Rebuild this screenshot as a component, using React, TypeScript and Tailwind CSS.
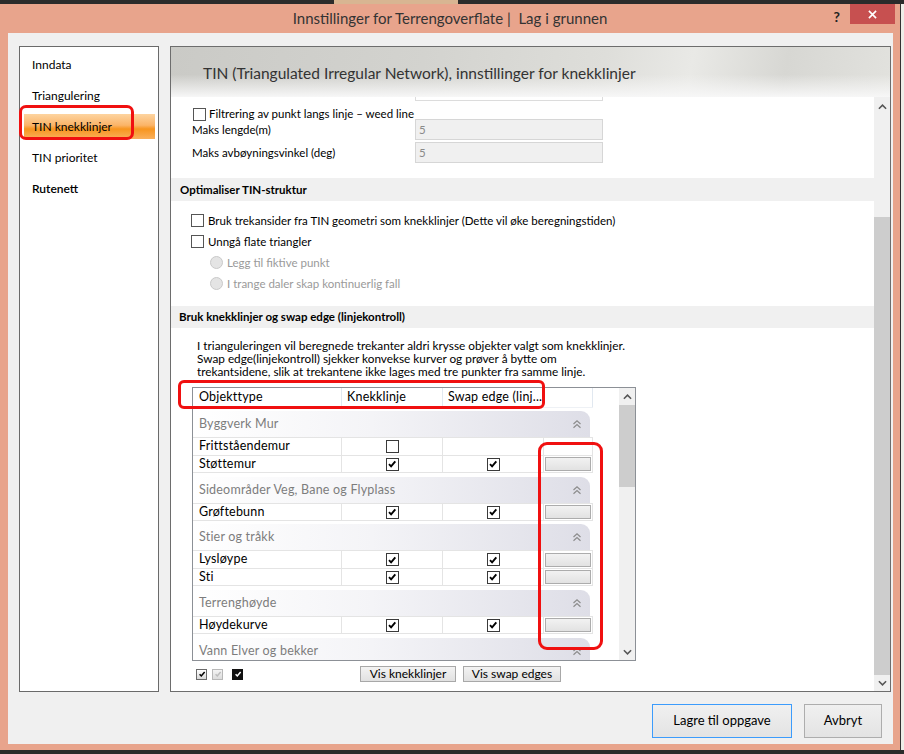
import React from 'react';

const SANS = "font-['Lato','Noto_Sans',sans-serif]";

function CheckMark({ className }: { className?: string }) {
    return (
        <svg viewBox="0 0 10 10" className={className}>
            <path d="M2 5.2 L4.1 7.4 L8.3 2.4" fill="none" stroke="currentColor" strokeWidth="1.9" />
        </svg>
    );
}

function Checkbox({ checked = false }: { checked?: boolean }) {
    return (
        <span className="flex h-[13px] w-[13px] shrink-0 items-center justify-center border border-[#3a3a3a] bg-white">
            {checked && <CheckMark className="h-[10px] w-[10px] text-black" />}
        </span>
    );
}

function FormCheckbox() {
    return <span className="h-[13px] w-[13px] shrink-0 border border-[#555] bg-white" />;
}

function Radio() {
    return <span className="h-[13px] w-[13px] shrink-0 rounded-full border border-[#c9c9c9] bg-[#e4e4e4]" />;
}

function Chevron({ down = false, className }: { down?: boolean; className?: string }) {
    return (
        <svg viewBox="0 0 10 6" className={className}>
            <path
                d={down ? 'M1 1 L5 5 L9 1' : 'M1 5 L5 1 L9 5'}
                fill="none"
                stroke="currentColor"
                strokeWidth="1.7"
            />
        </svg>
    );
}

function DoubleChevron() {
    return (
        <svg viewBox="0 0 10 10" className="h-[10px] w-[10px] text-[#8c8c8c]">
            <path d="M1.5 5 L5 1.8 L8.5 5 M1.5 8.8 L5 5.6 L8.5 8.8" fill="none" stroke="currentColor" strokeWidth="1.2" />
        </svg>
    );
}

interface Row {
    name: string;
    knekk: boolean;
    swap: boolean | null;
    button: boolean;
}

interface Group {
    title: string;
    gap: string;
    rows: Row[];
}

const groups: Group[] = [
    {
        title: 'Byggverk Mur',
        gap: 'mt-[3px]',
        rows: [
            { name: 'Frittståendemur', knekk: false, swap: null, button: false },
            { name: 'Støttemur', knekk: true, swap: true, button: true },
        ],
    },
    {
        title: 'Sideområder Veg, Bane og Flyplass',
        gap: 'mt-[4px]',
        rows: [{ name: 'Grøftebunn', knekk: true, swap: true, button: true }],
    },
    {
        title: 'Stier og tråkk',
        gap: 'mt-[3px]',
        rows: [
            { name: 'Lysløype', knekk: true, swap: true, button: true },
            { name: 'Sti', knekk: true, swap: true, button: true },
        ],
    },
    {
        title: 'Terrenghøyde',
        gap: 'mt-[4px]',
        rows: [{ name: 'Høydekurve', knekk: true, swap: true, button: true }],
    },
    {
        title: 'Vann Elver og bekker',
        gap: 'mt-[4px]',
        rows: [],
    },
];

const navItems = ['Inndata', 'Triangulering', 'TIN knekklinjer', 'TIN prioritet', 'Rutenett'];

function GroupBand({ title }: { title: string }) {
    return (
        <div className="flex h-[26px] w-[397px] items-center justify-between rounded-tr-[9px] bg-[linear-gradient(90deg,#ffffff_0%,#f4f4f7_45%,#dedee7_100%)] pl-[6px] pr-[8px]">
            <span className="text-[12.5px] tracking-[0.2px] text-[#7d7d7d]">{title}</span>
            <DoubleChevron />
        </div>
    );
}

function TableRow({ row, last }: { row: Row; last: boolean }) {
    return (
        <div className={`flex h-[18px] w-[400px] border-t border-r border-[#e4e4e4] ${last ? 'border-b' : ''}`}>
            <div className="flex w-[149px] items-center border-r border-[#e4e4e4] pl-[6px] text-[12.5px] tracking-[0.2px] text-black">
                {row.name}
            </div>
            <div className="flex w-[101px] items-center justify-center border-r border-[#e4e4e4]">
                <Checkbox checked={row.knekk} />
            </div>
            <div className="flex w-[101px] items-center justify-center border-r border-[#e4e4e4]">
                {row.swap !== null && <Checkbox checked={row.swap} />}
            </div>
            <div className="flex w-[48px] items-center justify-center">
                {row.button && (
                    <span className="h-[14px] w-[46px] border border-[#acacac] bg-[linear-gradient(180deg,#f2f2f2,#e2e2e2)]" />
                )}
            </div>
        </div>
    );
}

function ObjectTable() {
    return (
        <div className="ml-[21px] mt-[9px] flex h-[274px] w-[444px] border border-[#8c9096] bg-white">
            <div className="flex-1 overflow-hidden">
                <div className="flex h-[20px] w-[400px] border-b border-[#eef1f5] text-[12.5px] tracking-[0.2px] text-black">
                    <div className="flex w-[149px] items-center border-r border-[#e1e8f0] pl-[6px]">Objekttype</div>
                    <div className="flex w-[101px] items-center border-r border-[#e1e8f0] pl-[5px]">Knekklinje</div>
                    <div className="flex w-[101px] items-center border-r border-[#e1e8f0] pl-[5px]">Swap edge (linj...</div>
                    <div className="w-[49px] border-r border-[#e1e8f0]" />
                </div>
                {groups.map((g) => (
                    <div key={g.title} className={g.gap}>
                        <GroupBand title={g.title} />
                        {g.rows.map((r, i) => (
                            <TableRow key={r.name} row={r} last={i === g.rows.length - 1} />
                        ))}
                    </div>
                ))}
            </div>
            <div className="flex w-[16px] flex-col bg-[#f0f0f0]">
                <div className="flex h-[17px] items-center justify-center">
                    <Chevron className="h-[6px] w-[9px] text-[#555]" />
                </div>
                <div className="h-[82px] bg-[#cdcdcd]" />
                <div className="flex-1" />
                <div className="flex h-[17px] items-center justify-center">
                    <Chevron down className="h-[6px] w-[9px] text-[#555]" />
                </div>
            </div>
        </div>
    );
}

function MiniBox({ variant }: { variant: 'normal' | 'faded' | 'dark' }) {
    const box =
        variant === 'dark'
            ? 'bg-[#111] border-[#111] text-white'
            : variant === 'faded'
              ? 'bg-[linear-gradient(180deg,#f4f4f4,#dcdcdc)] border-[#b8b8b8] text-[#bdbdbd]'
              : 'bg-[linear-gradient(180deg,#ffffff,#d8d8d8)] border-[#6a6a6a] text-black';
    return (
        <span className={`flex h-[11px] w-[11px] items-center justify-center border ${box}`}>
            <CheckMark className="h-[8px] w-[8px]" />
        </span>
    );
}

function SmallButton({ label, width }: { label: string; width: string }) {
    return (
        <button
            type="button"
            className={`flex h-[16px] ${width} items-center justify-center border border-[#a8a8a8] bg-[linear-gradient(180deg,#f3f3f3,#e1e1e1)] text-[12px] text-black`}
        >
            {label}
        </button>
    );
}

function ContentArea() {
    return (
        <div className="flex h-[594px]">
            <div className="w-[703px] overflow-hidden bg-white text-[11.5px] text-black">
                <div className="ml-[244px] h-[4px] w-[188px] border-x border-b border-[#dcdcdc]" />

                <div className="mt-[3px] flex h-[20px] items-center pl-[22px]">
                    <FormCheckbox />
                    <span className="ml-[3px]">Filtrering av punkt langs linje – weed line</span>
                </div>

                <div className="mt-[-5px] flex h-[21px] items-center">
                    <span className="w-[244px] pl-[21px]">Maks lengde(m)</span>
                    <span className="flex h-[21px] w-[188px] items-center border border-[#d6d6d6] bg-[#f0f0f0] pl-[3px] text-[#8a8a8a]">5</span>
                </div>
                <div className="mt-[2px] flex h-[21px] items-center">
                    <span className="w-[244px] pl-[21px]">Maks avbøyningsvinkel (deg)</span>
                    <span className="flex h-[21px] w-[188px] items-center border border-[#d6d6d6] bg-[#f0f0f0] pl-[3px] text-[#8a8a8a]">5</span>
                </div>

                <div className="mt-[15px] flex h-[23px] items-center bg-[#f0f0f0] pl-[9px] font-bold">
                    Optimaliser TIN-struktur
                </div>

                <div className="mt-[9px] flex h-[21px] items-center pl-[20px]">
                    <FormCheckbox />
                    <span className="ml-[4px]">Bruk trekansider fra TIN geometri som knekklinjer (Dette vil øke beregningstiden)</span>
                </div>
                <div className="flex h-[21px] items-center pl-[20px]">
                    <FormCheckbox />
                    <span className="ml-[4px]">Unngå flate triangler</span>
                </div>
                <div className="flex h-[21px] items-center pl-[39px] text-[#9a9a9a]">
                    <Radio />
                    <span className="ml-[4px]">Legg til fiktive punkt</span>
                </div>
                <div className="flex h-[21px] items-center pl-[39px] text-[#9a9a9a]">
                    <Radio />
                    <span className="ml-[4px]">I trange daler skap kontinuerlig fall</span>
                </div>

                <div className="mt-[12px] flex h-[22px] items-center bg-[#f0f0f0] pl-[8px] font-bold">
                    Bruk knekklinjer og swap edge (linjekontroll)
                </div>

                <div className="mt-[11px] pl-[26px] text-[11.8px] leading-[13px]">
                    <div>I trianguleringen vil beregnede trekanter aldri krysse objekter valgt som knekklinjer.</div>
                    <div>Swap edge(linjekontroll) sjekker konvekse kurver og prøver å bytte om</div>
                    <div>trekantsidene, slik at trekantene ikke lages med tre punkter fra samme linje.</div>
                </div>

                <ObjectTable />

                <div className="mt-[5px] flex h-[16px] items-center">
                    <div className="ml-[25px] flex items-center">
                        <MiniBox variant="normal" />
                        <span className="ml-[5px]">
                            <MiniBox variant="faded" />
                        </span>
                        <span className="ml-[9px]">
                            <MiniBox variant="dark" />
                        </span>
                    </div>
                    <div className="ml-[117px] flex gap-[7px]">
                        <SmallButton label="Vis knekklinjer" width="w-[96px]" />
                        <SmallButton label="Vis swap edges" width="w-[98px]" />
                    </div>
                </div>
            </div>

            <div className="flex w-[16px] flex-col bg-[#f0f0f0]">
                <div className="flex h-[20px] items-center justify-center">
                    <Chevron className="h-[6px] w-[9px] text-[#555]" />
                </div>
                <div className="h-[100px]" />
                <div className="flex-1 bg-[#cdcdcd]" />
                <div className="flex h-[16px] items-center justify-center bg-[#f0f0f0]">
                    <Chevron down className="h-[6px] w-[9px] text-[#555]" />
                </div>
            </div>
        </div>
    );
}

export default function App() {
    return (
        <div className={`relative flex h-[754px] w-[904px] flex-col overflow-hidden bg-[#2b2b2b] ${SANS}`}>
            <div className="flex h-[4px] shrink-0">
                <div className="ml-[334px] w-[124px] bg-[#d8b592]" />
            </div>

            <div className="flex h-[746px] shrink-0">
                <div className="flex w-[900px] flex-col bg-[#e8a48c]">
                    <div className="relative flex h-[29px] items-center justify-center text-[15px] text-[#333]">
                        Innstillinger for Terrengoverflate |&nbsp; Lag i grunnen
                        <div className="absolute right-[5px] top-0 flex items-start">
                            <span className="mr-[10px] mt-[2px] text-[14px] font-bold text-[#222]">?</span>
                            <span className="flex h-[20px] w-[45px] items-center justify-center bg-[#c75050]">
                                <svg viewBox="0 0 10 10" className="h-[9px] w-[9px]">
                                    <path d="M1 1 L9 9 M9 1 L1 9" stroke="white" strokeWidth="1.8" />
                                </svg>
                            </span>
                        </div>
                    </div>

                    <div className="ml-[8px] h-[711px] w-[885px] bg-[#f0f0f0] pl-[11px] pt-[13px]">
                        <div className="flex h-[646px]">
                            <div className="w-[140px] border border-[#6a6a6a] bg-white pt-[2px] text-[12px] text-black">
                                {navItems.map((item) => (
                                    <div key={item} className="flex h-[31px] items-center">
                                        {item === 'TIN knekklinjer' ? (
                                            <div className="ml-[4px] mr-[3px] flex h-[25px] flex-1 items-center bg-[linear-gradient(180deg,#fdd4a0_0%,#fbb468_45%,#f7951f_60%,#fab05c_100%)] pl-[8px]">
                                                {item}
                                            </div>
                                        ) : (
                                            <span className={`pl-[12px] ${item === 'Rutenett' ? 'font-semibold' : ''}`}>{item}</span>
                                        )}
                                    </div>
                                ))}
                            </div>

                            <div className="ml-[11px] w-[721px] border border-[#6d6d6d]">
                                <div className="flex h-[50px] items-center bg-[linear-gradient(180deg,rgba(246,246,246,0)_55%,#f7f7f7_100%),linear-gradient(100deg,#cacac6_0%,#d3d3cf_35%,#dededa_60%,#e9e9e6_72%,#d7d7d3_85%,#e2e2de_100%)] pl-[32px] pt-[4px] text-[15.5px] text-[#333]">
                                    TIN (Triangulated Irregular Network), innstillinger for knekklinjer
                                </div>
                                <ContentArea />
                            </div>
                        </div>

                        <div className="mt-[12px] flex justify-end gap-[12px] pr-[11px]">
                            <button
                                type="button"
                                className="h-[34px] w-[140px] border border-[#3c9cfc] bg-[linear-gradient(180deg,#f0f0f0,#e3e3e3)] text-[13px] text-black"
                            >
                                Lagre til oppgave
                            </button>
                            <button
                                type="button"
                                className="h-[34px] w-[78px] border border-[#adadad] bg-[linear-gradient(180deg,#f0f0f0,#e3e3e3)] text-[13px] text-black"
                            >
                                Avbryt
                            </button>
                        </div>
                    </div>
                </div>
                <div className="w-[4px] border-l border-[#333] bg-[#eeeee8]" />
            </div>

            <div className="absolute left-[19px] top-[105px] h-[35px] w-[115px] rounded-[7px] border-[3px] border-[#f01010]" />
            <div className="absolute left-[178px] top-[380px] h-[29px] w-[367px] rounded-[6px] border-[3px] border-[#f01010]" />
            <div className="absolute left-[538px] top-[442px] h-[208px] w-[65px] rounded-[9px] border-[3px] border-[#f01010]" />
        </div>
    );
}
